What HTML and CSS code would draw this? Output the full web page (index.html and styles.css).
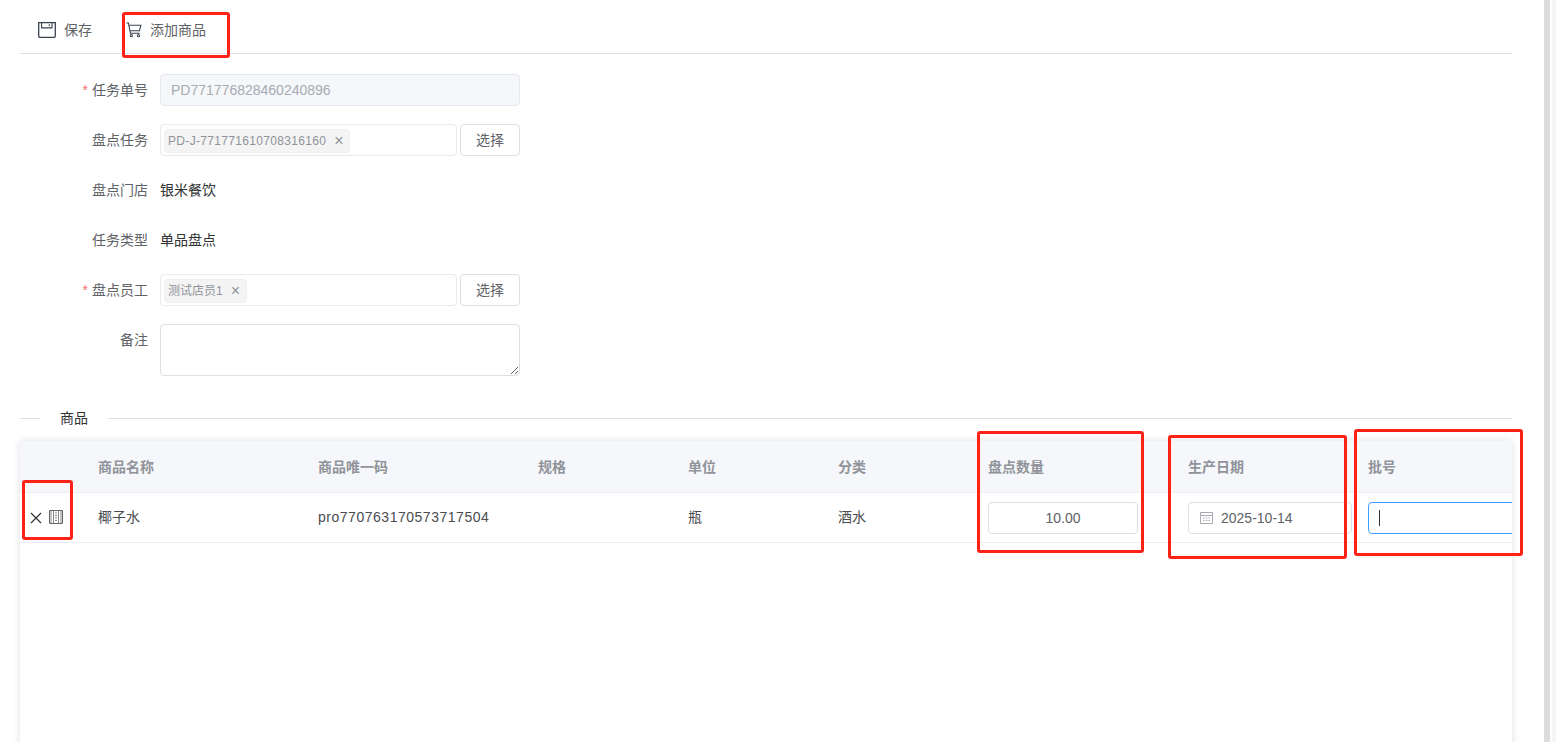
FILE: index.html
```html
<!DOCTYPE html>
<html lang="zh">
<head>
<meta charset="utf-8">
<title>盘点</title>
<link rel="stylesheet" href="styles.css">
</head>
<body>
<div class="page">
  <main class="content">
    <div class="toolbar">
      <button class="tool tool-save">
        <svg class="tool-icon" width="18" height="16" viewBox="0 0 18 16" fill="none" stroke="#3a4350" stroke-width="1.3"><path d="M.7.7h16.600v13.500a1.100 1.100 0 0 1-1.100 1.100H1.800a1.100 1.100 0 0 1-1.100-1.100z"/><path d="M3.600.7v5.200h10.400V.7" stroke-width="1.100"/><path d="M11.300 2.200v2" stroke-width="1.100"/></svg>
        <span>保存</span>
      </button>
      <button class="tool tool-add">
        <svg class="tool-icon" width="16" height="16" viewBox="0 0 15 15" fill="none" stroke="#3a4350" stroke-width="1"><path d="M.3 1h2l1.800 9.500h8.800"/><path d="M2.700 3h11.300l-1.400 5.200H3.700"/><circle cx="5" cy="12.800" r="1"/><circle cx="11.700" cy="12.800" r="1"/></svg>
        <span>添加商品</span>
      </button>
    </div>

    <form class="form">
      <div class="row">
        <label class="label"><i class="req">*</i>任务单号</label>
        <input class="input disabled" value="PD771776828460240896" disabled>
      </div>
      <div class="row">
        <label class="label">盘点任务</label>
        <div class="picker">
          <div class="tagbox"><span class="tag tag-code">PD-J-771771610708316160<b class="x">×</b></span></div>
          <button type="button" class="btn">选择</button>
        </div>
      </div>
      <div class="row">
        <label class="label">盘点门店</label>
        <span class="value">银米餐饮</span>
      </div>
      <div class="row">
        <label class="label">任务类型</label>
        <span class="value">单品盘点</span>
      </div>
      <div class="row">
        <label class="label"><i class="req">*</i>盘点员工</label>
        <div class="picker">
          <div class="tagbox"><span class="tag">测试店员1<b class="x">×</b></span></div>
          <button type="button" class="btn">选择</button>
        </div>
      </div>
      <div class="row row-top">
        <label class="label">备注</label>
        <textarea class="textarea"></textarea>
      </div>
    </form>

    <div class="divider"><span>商品</span></div>

    <section class="table">
      <div class="thead">
        <div></div>
        <div>商品名称</div><div>商品唯一码</div><div>规格</div><div>单位</div><div>分类</div><div>盘点数量</div><div>生产日期</div><div>批号</div>
      </div>
      <div class="trow">
        <div class="ops">
          <svg width="12" height="12" viewBox="0 0 12 12" fill="none" stroke="#333" stroke-width="1.200"><path d="M1 1l10 10M11 1L1 11"/></svg>
          <svg class="barcode" width="14" height="14" viewBox="0 0 14 14" fill="none" stroke="#666" stroke-width="1"><path d="M.5.5h13v13H.5z"/><path d="M2 1v12M4.500 1v12M9.500 1v12M12 1v12" stroke="#888"/><path d="M6 3h2M6 5.500h2M6 8h2M6 10.500h2" stroke="#888"/></svg>
        </div>
        <div class="cell-text">椰子水</div><div class="cell-text code">pro770763170573717504</div><div></div><div class="cell-text">瓶</div><div class="cell-text">酒水</div>
        <div><div class="cell-input num">10.00</div></div>
        <div><div class="cell-input date">
          <svg width="13" height="13" viewBox="0 0 13 13" fill="none" stroke="#a8abb2" stroke-width="1"><path d="M.5 1.500h12v11H.5zM.5 4.500h12M3 7h1.500M5.800 7h1.500M8.600 7h1.500M3 9.500h1.500M5.800 9.500h1.500M8.600 9.500h1.500"/></svg>
          <span>2025-10-14</span>
        </div></div>
        <div><div class="cell-input focus"><i class="caret"></i></div></div>
      </div>
    </section>
  </main>
  <div class="scrollbar"><div class="thumb"></div><div class="gap"></div><div class="edge"></div></div>
</div>
<div class="mark m1"></div>
<div class="mark m2"></div>
<div class="mark m3"></div>
<div class="mark m4"></div>
<div class="mark m5"></div>
</body>
</html>
```
FILE: styles.css
```css
* { box-sizing: border-box; }
html, body { margin: 0; height: 100%; overflow: hidden; background: #fff; }
body { font: 14px/20px "Liberation Sans", "Noto Sans CJK SC", sans-serif; color: #303133; }
.page { display: flex; height: 742px; }
.content { flex: 1; min-width: 0; padding: 0 32px 0 20px; overflow: hidden; }

.toolbar { height: 54px; border-bottom: 1px solid #dcdfe6; display: flex; align-items: center; padding: 7px 0 0 18px; }
.tool { display: flex; align-items: center; padding: 0; border: 0; background: none; font: inherit; color: #606266; white-space: nowrap; }
.tool-save { gap: 8px; margin-right: 34px; }
.tool-add { gap: 8px; }
.tool-icon { flex: none; }

.form { padding-top: 20px; width: 500px; }
.row { display: flex; align-items: center; min-height: 32px; margin-bottom: 18px; }
.row-top { align-items: flex-start; margin-bottom: 0; }
.label { width: 128px; margin-right: 12px; text-align: right; color: #606266; flex: none; }
.row-top .label { line-height: 32px; }
.req { font-style: normal; color: #f56c6c; margin-right: 4px; }
.input { width: 360px; height: 32px; border: 1px solid #e4e7ed; border-radius: 4px; padding: 0 10px; font: inherit; }
.disabled { background: #f5f7fa; color: #a8abb2; }
.picker { display: flex; width: 360px; gap: 3px; }
.tagbox { flex: 1; height: 32px; border: 1px solid #e9e9ee; border-radius: 4px; padding: 3px; display: flex; align-items: center; }
.tag { display: flex; align-items: center; height: 24px; margin-top: 2px; background: #f4f4f5; border: 1px solid #efefef; border-radius: 4px; padding: 0 6px 1px 3px; font-size: 12px; line-height: 20px; color: #909399; }
.tag-code { letter-spacing: .32px; padding-right: 5px; }
.x { font-weight: 400; font-size: 16px; margin-left: 8px; color: #909399; letter-spacing: 0; }
.btn { width: 60px; height: 32px; background: #fff; border: 1px solid #dcdfe6; border-radius: 4px; font: inherit; color: #606266; padding: 0; }
.value { color: #303133; }
.textarea { width: 360px; height: 52px; border: 1px solid #dcdfe6; border-radius: 4px; display: block; }

.divider { display: flex; align-items: center; margin-top: 32px; height: 20px; }
.divider::before { content: ""; width: 20px; border-top: 1px solid #dcdfe6; }
.divider::after { content: ""; flex: 1; border-top: 1px solid #dcdfe6; }
.divider span { padding: 0 20px; }

.table { margin-top: 13px; height: 400px; box-shadow: 0 0 8px rgba(0,0,0,.12); overflow: hidden; }
.thead, .trow { display: grid; grid-template-columns: 68px 220px 220px 150px 150px 150px 200px 180px 200px; align-items: center; }
.thead > div, .trow > div { padding-left: 10px; white-space: nowrap; }
.thead { height: 52px; background: #f5f7fa; border-bottom: 1px solid #ebeef5; font-weight: 700; color: #909399; }
.trow { height: 50px; border-bottom: 1px solid #ebeef5; color: #4a4c50; }
.trow > .ops { display: flex; align-items: center; gap: 7px; padding-left: 10px; }
.barcode { margin-top: -2px; }
.trow > .cell-text { margin-top: -2px; }
.trow > .code { letter-spacing: .52px; }
.cell-input { height: 32px; border: 1px solid #dcdfe6; border-radius: 4px; display: flex; align-items: center; color: #606266; }
.num { width: 150px; justify-content: center; }
.date { width: 164px; padding-left: 11px; gap: 8px; }
.focus { width: 200px; border-color: #409eff; padding-left: 10px; }
.caret { width: 1px; height: 16px; background: #303133; }

.scrollbar { width: 12px; display: flex; flex: none; }
.thumb { width: 6px; background: #dcdcdf; }
.gap { width: 2px; background: #fff; }
.edge { flex: 1; background: #f5f5f5; }

.mark { position: absolute; border: 3px solid #ff2016; border-radius: 3px; pointer-events: none; }
.m1 { left: 122px; top: 12px; width: 108px; height: 46px; }
.m2 { left: 22px; top: 480px; width: 51px; height: 60px; }
.m3 { left: 977px; top: 431px; width: 167px; height: 122px; }
.m4 { left: 1168px; top: 435px; width: 179px; height: 124px; }
.m5 { left: 1354px; top: 429px; width: 169px; height: 127px; }
```
